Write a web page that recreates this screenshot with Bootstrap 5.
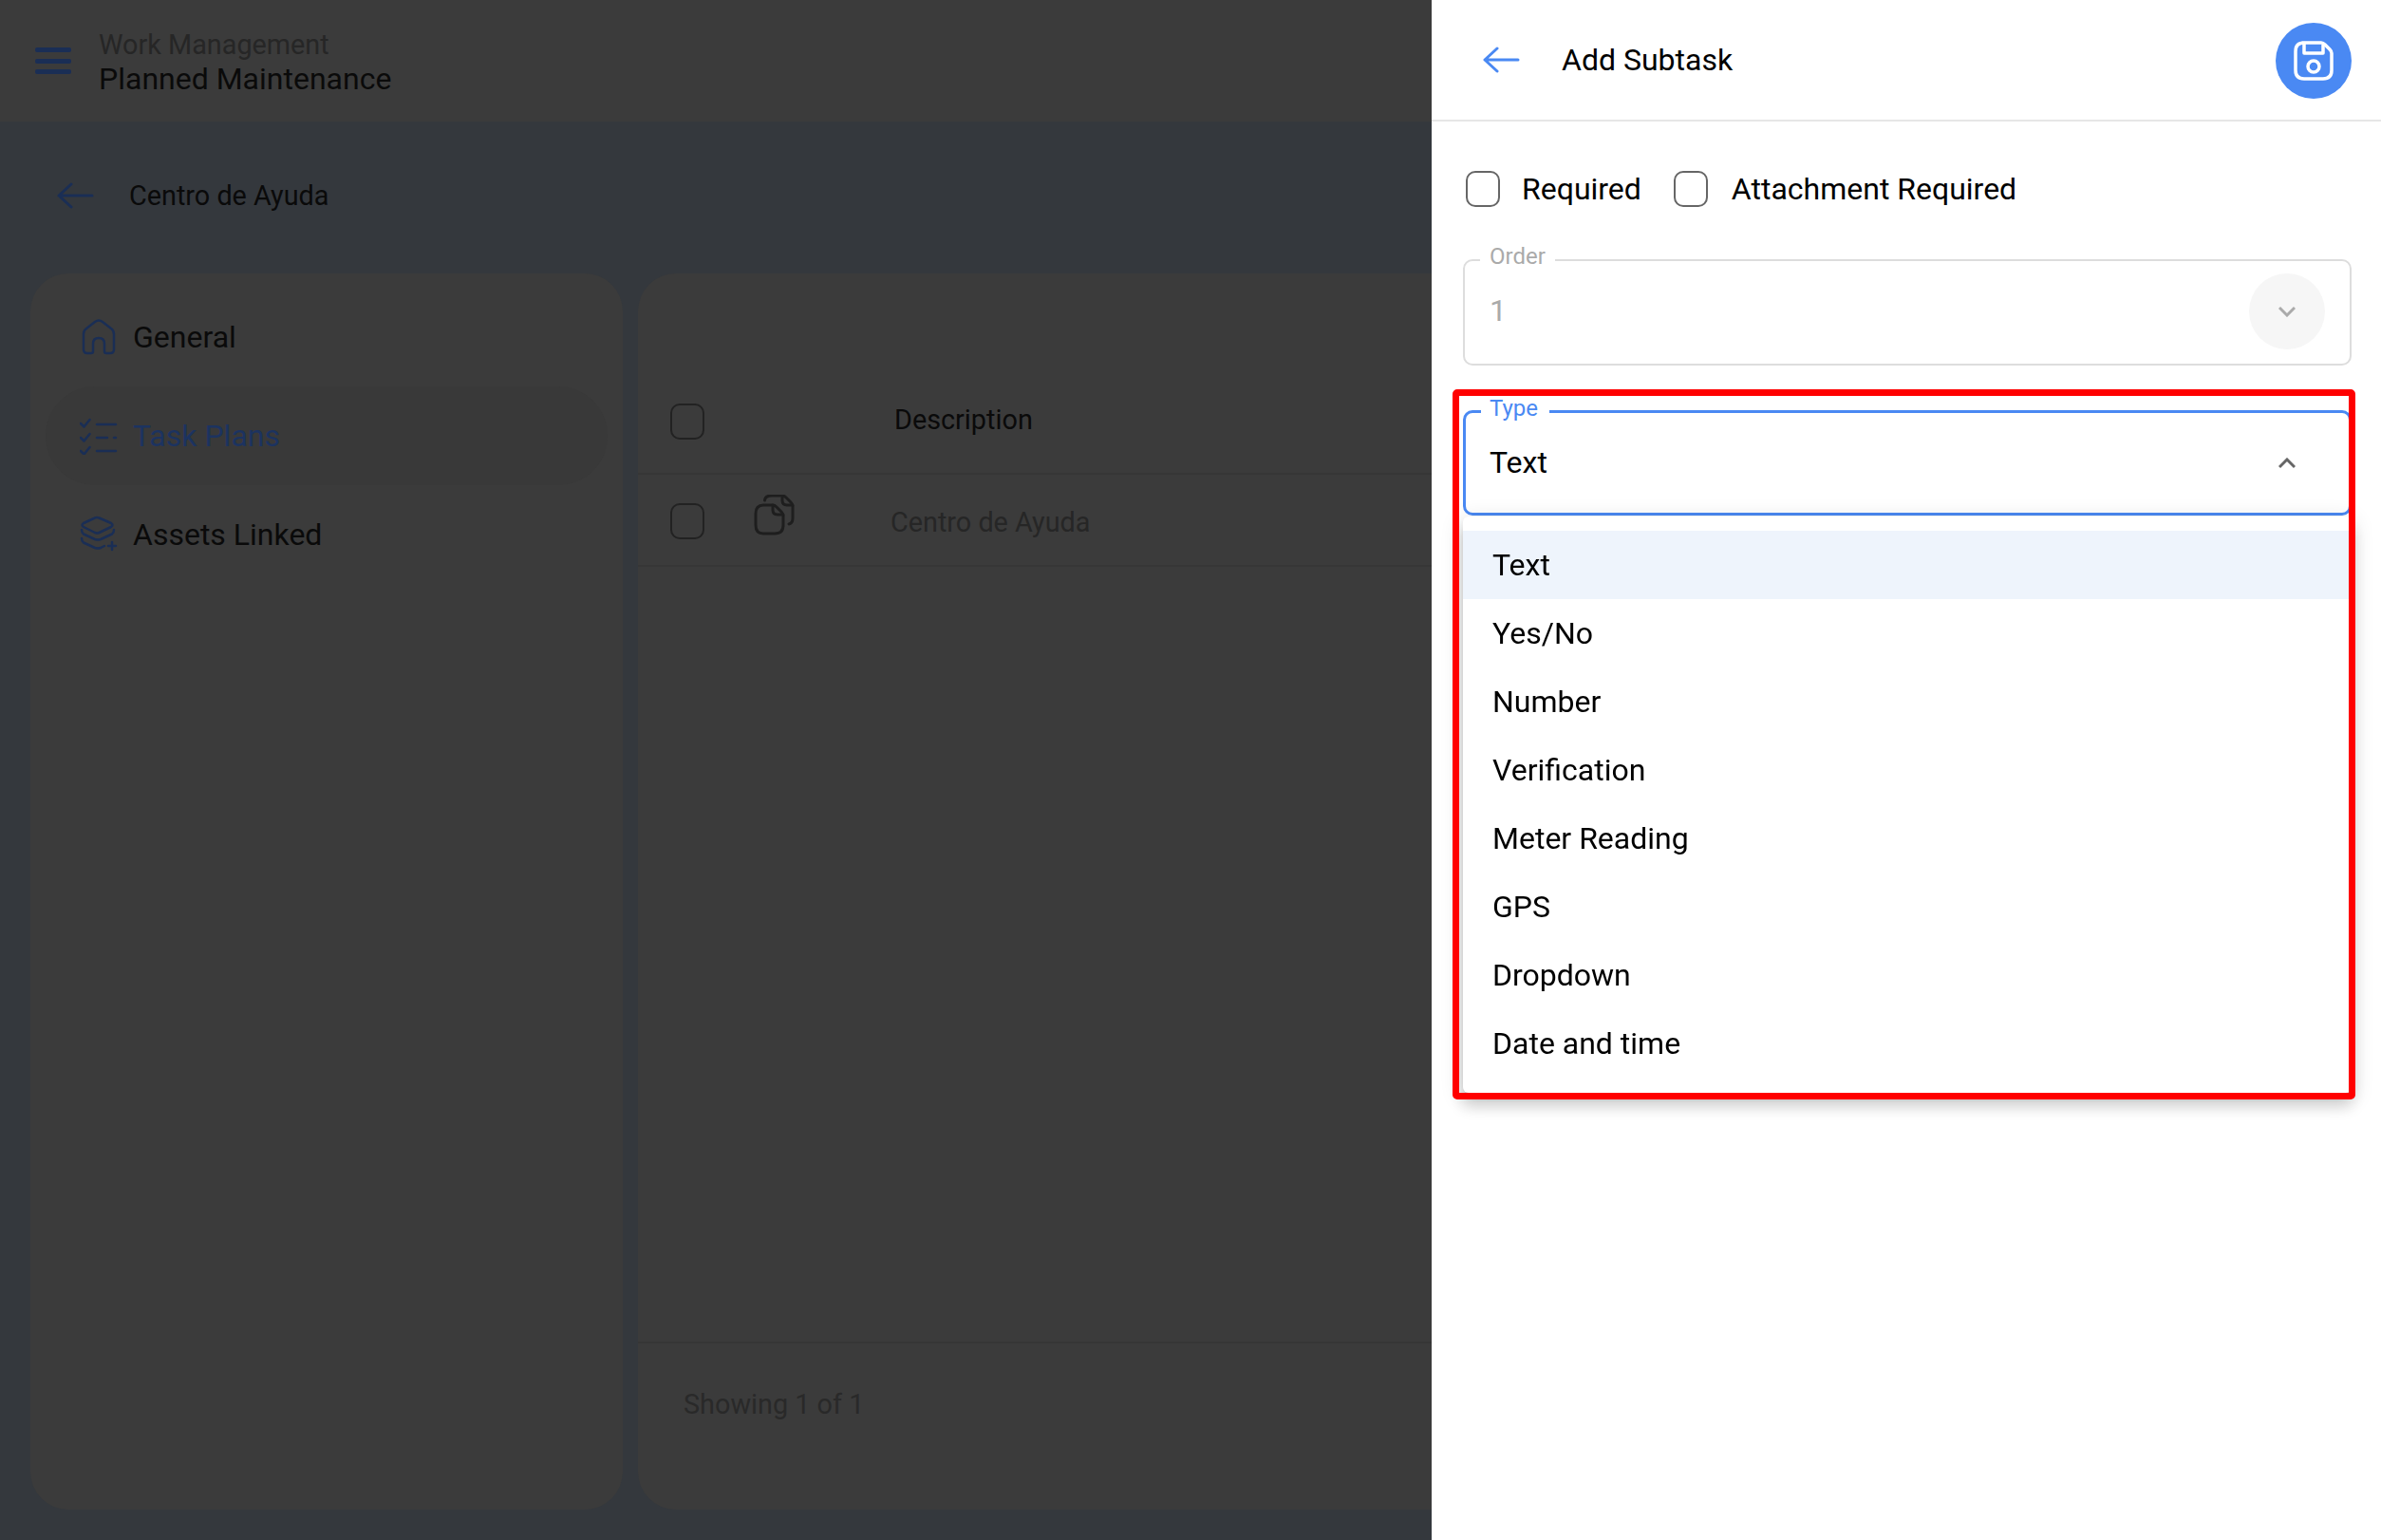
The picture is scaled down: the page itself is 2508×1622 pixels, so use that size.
<!DOCTYPE html>
<html lang="en">
<head>
<meta charset="utf-8">
<title>Add Subtask</title>
<link href="https://cdn.jsdelivr.net/npm/bootstrap@5.3.0/dist/css/bootstrap.min.css" rel="stylesheet">
<style>
html,body{height:100%;overflow:hidden}
body{font-family:Roboto,"Liberation Sans",sans-serif;background:#34383d;color:#0a0a0a;font-size:32px;line-height:1.2}
.topstrip{height:128px;background:#3b3b3b;padding-left:37px;gap:29px}
.burger{width:38px;height:28px;flex:none}
.crumbs{padding-top:3px}
.crumb-sup{font-size:28.8px;line-height:34px;color:#262626}
.crumb-main{font-size:32px;line-height:38px;color:#0a0a0a}
.backrow{height:160px;padding:0 0 4px 60px;font-size:28.8px;gap:37px}
.dimarrow{color:#1a2e55}
.panes{height:1302px;padding-left:32px;gap:16px}
.sidepane{width:624px;flex:none;background:#3b3b3b;border-radius:40px;padding:15px 16px}
.sideitem{height:104px;padding-left:36px;border-radius:52px;gap:16px;color:#0a0a0a;font-size:32px}
.sideitem.current{background:#393939;color:#1c3360}
.sideicon{width:40px;height:40px;flex:none;color:#1a2e55}
.tablepane{width:1900px;flex:none;background:#3b3b3b;border-radius:40px 0 0 40px}
.rowhead{height:116px;margin-top:96px;border-bottom:2px solid #363636;font-size:28.8px;color:#0a0a0a}
.rowbody{height:97px;border-bottom:2px solid #363636;font-size:28.8px;color:#262626}
.cellcheck{width:122px;padding-left:34px;flex:none}
.rowhead .cellcheck{padding-top:5px}
.rowbody .cellcheck{padding-top:3px}
.cellcopy{width:144px;flex:none;margin-bottom:10px}
.rowhead .celltext{padding-left:4px;padding-top:3px}
.rowbody .celltext{padding-top:5px}
.pane-spacer{flex:1}
.pane-foot{height:177px;border-top:2px solid #363636;padding:47px 48px 0;font-size:28.8px;color:#292929}
.dimcheck.form-check-input{width:36px;height:38px;margin:0;background-color:transparent;border:2px solid #222;border-radius:10px;flex:none}
.drawer.offcanvas{--bs-offcanvas-width:1000px;background:#fff;border:0;color:#000;z-index:1045}
.drawerhead{height:128px;border-bottom:2px solid #e6e6e6;padding:0 31px 0 54px;flex:none}
.draweretitle{font-size:32px;margin-left:44px}
.savebtn{width:80px;height:80px;border-radius:50%;background:#4a89f3;border:0;padding:0;margin-top:2px}
.drawerbody{padding:52px 31.500px 0 33px;position:relative}
.checkrow{height:38px;padding-left:3px;font-size:32px}
.realcheck.form-check-input{width:36px;height:38px;margin:0;border:2px solid #666;border-radius:10px;flex:none;background-color:#fff}
.checklabel{margin-left:23px;margin-right:34px}
.checklabel.widelabel{margin-left:25px}
.outfield{border:2px solid #ddd;border-radius:10px;margin-top:39.500px;height:127px}
.outfield legend{float:none;width:auto;font-size:24px;line-height:24px;color:#aaa;margin:0 0 0 16px;padding:0 10px 8px}
.fieldline{height:77px;padding-left:26px;padding-right:26px;font-size:32px;color:#aaa}
.fieldvalue{margin-bottom:1px}
.chevdisc{width:80px;height:80px;border-radius:50%;background:#f6f6f6;flex:none}
.typewrap{position:relative;margin:33.500px 0 0}
.typewrap .outfield{margin-top:0;height:125px;border:3px solid #4a89f3}
.typewrap .outfield legend{color:#4a89f3;margin-left:16px;padding:0 12px 6px 9px}
.typewrap .fieldline{height:79px;padding-left:25px;padding-right:25px;color:#000}
.typewrap .fieldvalue{margin-bottom:0}
.chevslot{width:80px}
.typewrap .dropdown-menu{top:100%;left:0;margin:1px 0 0;width:100%;border:0;border-radius:6px;padding:15px 0 16px;background:#fff;font-size:32px;--bs-dropdown-font-size:32px;box-shadow:0 8px 8px -5px rgba(0,0,0,.2),0 13px 16px 2px rgba(0,0,0,.14),0 5px 22px 3px rgba(0,0,0,.12)}
.typewrap .dropdown-item{height:72px;padding:0 31px;display:flex;align-items:center;color:#000}
.typewrap .dropdown-item.active{background:#eef4fc;color:#000}
.redmark{position:absolute;left:-11px;top:-8px;width:951px;height:748px;border:7px solid #f00;border-radius:5px;z-index:1001;pointer-events:none}
</style>
</head>
<body>
<header class="topstrip d-flex align-items-center">
  <svg class="burger" viewBox="0 0 38 28"><g fill="#1a2e55"><rect y="0" width="38" height="5" rx="2"/><rect y="12" width="38" height="5" rx="2"/><rect y="23" width="38" height="5" rx="2"/></g></svg>
  <div class="crumbs">
    <div class="crumb-sup">Work Management</div>
    <div class="crumb-main">Planned Maintenance</div>
  </div>
</header>
<div class="backrow d-flex align-items-center">
  <svg class="dimarrow" width="39" height="28" viewBox="0 0 39 28" fill="none" stroke="currentColor" stroke-width="3" stroke-linecap="round" stroke-linejoin="round"><path d="M37 14H2M15 2L2 14l13 12"/></svg>
  <span>Centro de Ayuda</span>
</div>
<main class="panes d-flex">
  <nav class="sidepane">
    <div class="sideitem d-flex align-items-center">
      <svg class="sideicon" viewBox="0 0 40 40" fill="none" stroke="currentColor" stroke-width="2.500" stroke-linejoin="round"><path d="M4 17Q4 13 7 11L16 4Q20 1 24 4L33 11Q36 13 36 17V33Q36 37 32 37H28Q26 37 26 35V27Q26 21 20 21Q14 21 14 27V35Q14 37 12 37H8Q4 37 4 33Z"/></svg>
      <span>General</span>
    </div>
    <div class="sideitem current d-flex align-items-center">
      <svg class="sideicon" viewBox="0 0 40 40" fill="none" stroke="#1a2e55" stroke-width="2.500" stroke-linecap="round" stroke-linejoin="round"><path d="M1 7l3.500 3.500L10.500 3M1 22l3.500 3.500L10.500 18M1 36l3.500 3.500L10.500 32M18 8H38M18 22H29M36 22H38M18 36H38"/></svg>
      <span>Task Plans</span>
    </div>
    <div class="sideitem d-flex align-items-center">
      <svg class="sideicon" viewBox="0 0 40 40" fill="none" stroke="currentColor" stroke-width="2.500" stroke-linecap="round" stroke-linejoin="round"><path d="M18 2Q19 2 20.500 2.500L33 8Q36 10 33 12L20.500 18Q18.500 19 16 18L4 12Q1 10 4 8L16 2.500Q17 2 18 2Z"/><path d="M2 15Q2 18 4 19.500L16 25Q19 26 22 25L34 19.500Q36 18 36 15"/><path d="M2 24Q2 27 4 28.500L16 34Q19 35 22 34L26 32"/><path d="M34 28v8M30 32h8"/></svg>
      <span>Assets Linked</span>
    </div>
  </nav>
  <section class="tablepane d-flex flex-column">
    <div class="rowhead d-flex align-items-center">
      <div class="cellcheck"><input class="dimcheck form-check-input" type="checkbox" aria-label="Select all"></div>
      <div class="cellcopy"></div>
      <div class="celltext">Description</div>
    </div>
    <div class="rowbody d-flex align-items-center">
      <div class="cellcheck"><input class="dimcheck form-check-input" type="checkbox" aria-label="Select row"></div>
      <div class="cellcopy">
        <svg width="44" height="44" viewBox="0 0 44 44" fill="none" stroke="#1e1e1e" stroke-width="3" stroke-linecap="round" stroke-linejoin="round" class="d-block"><path d="M10 11H20Q22 11 24 13L29 18Q31 20 31 22V32Q31 41 22 41H10Q2 41 2 32V20Q2 11 10 11Z"/><path d="M20 11V16Q20 21 25 21H31"/><path d="M11.500 6Q12 1 19 1H30Q32 1 34 3L39 8Q41 10 41 12V25Q41 30 37 31"/><path d="M30 1V6Q30 11 35 11H41"/></svg>
      </div>
      <div class="celltext">Centro de Ayuda</div>
    </div>
    <div class="pane-spacer"></div>
    <div class="pane-foot">Showing 1 of 1</div>
  </section>
</main>

<aside class="drawer offcanvas offcanvas-end show" data-bs-backdrop="false" data-bs-scroll="true" tabindex="-1" aria-label="Add Subtask">
  <div class="drawerhead d-flex align-items-center">
    <svg width="39" height="28" viewBox="0 0 39 28" fill="none" stroke="#4a89f3" stroke-width="3" stroke-linecap="round" stroke-linejoin="round"><path d="M37 14H2M15 2L2 14l13 12"/></svg>
    <span class="draweretitle">Add Subtask</span>
    <button class="savebtn btn ms-auto d-flex align-items-center justify-content-center" type="button" aria-label="Save">
      <svg width="42" height="42" viewBox="0 0 42 42" fill="none" stroke="#fff" stroke-width="3.500" stroke-linejoin="round"><path d="M9 2H29Q31 2 33 4L38 9Q40 11 40 13V31Q40 40 31 40H11Q2 40 2 31V11Q2 2 11 2Z"/><path d="M11 2V13H31V4"/><circle cx="21" cy="27" r="6"/></svg>
    </button>
  </div>
  <div class="drawerbody">
    <div class="checkrow d-flex align-items-center">
      <input class="realcheck form-check-input" type="checkbox" id="reqA">
      <label class="checklabel" for="reqA">Required</label>
      <input class="realcheck form-check-input" type="checkbox" id="reqB">
      <label class="checklabel widelabel" for="reqB">Attachment Required</label>
    </div>
    <fieldset class="outfield">
      <legend>Order</legend>
      <div class="fieldline d-flex align-items-center justify-content-between">
        <span class="fieldvalue">1</span>
        <span class="chevdisc d-flex align-items-center justify-content-center">
          <svg width="18" height="12" viewBox="0 0 18 12" fill="none" stroke="#aaa" stroke-width="3"><path d="M1 2L9 10L17 2"/></svg>
        </span>
      </div>
    </fieldset>
    <div class="typewrap dropdown">
      <fieldset class="outfield">
        <legend>Type</legend>
        <div class="fieldline d-flex align-items-center justify-content-between">
          <span class="fieldvalue">Text</span>
          <span class="chevslot d-flex justify-content-center">
            <svg width="18" height="12" viewBox="0 0 18 12" fill="none" stroke="#666" stroke-width="3"><path d="M1 10L9 2L17 10"/></svg>
          </span>
        </div>
      </fieldset>
      <ul class="dropdown-menu show">
        <li><a class="dropdown-item active" href="#">Text</a></li>
        <li><a class="dropdown-item" href="#">Yes/No</a></li>
        <li><a class="dropdown-item" href="#">Number</a></li>
        <li><a class="dropdown-item" href="#">Verification</a></li>
        <li><a class="dropdown-item" href="#">Meter Reading</a></li>
        <li><a class="dropdown-item" href="#">GPS</a></li>
        <li><a class="dropdown-item" href="#">Dropdown</a></li>
        <li><a class="dropdown-item" href="#">Date and time</a></li>
      </ul>
      <div class="redmark"></div>
    </div>
  </div>
</aside>
<script src="https://cdn.jsdelivr.net/npm/bootstrap@5.3.0/dist/js/bootstrap.bundle.min.js"></script>
</body>
</html>
